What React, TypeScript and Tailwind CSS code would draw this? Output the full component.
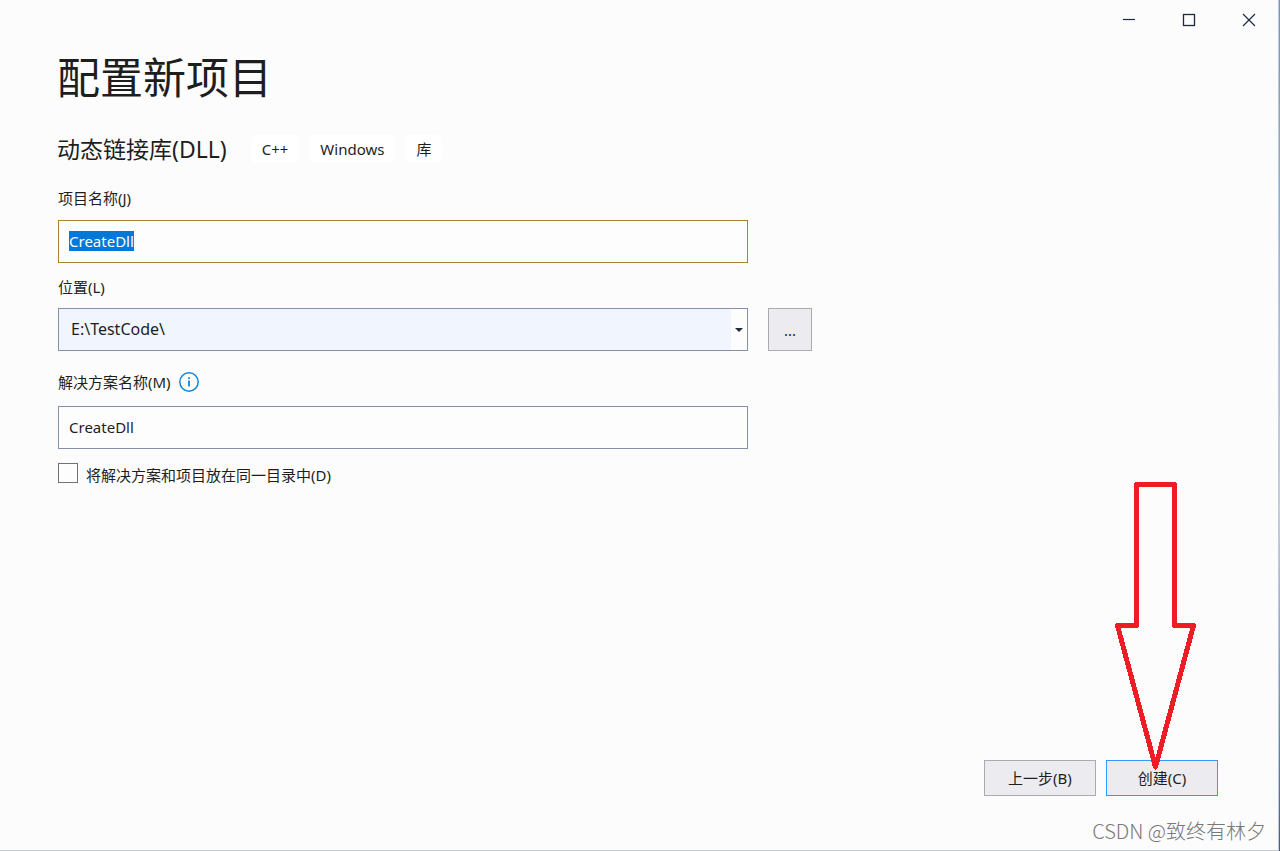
import { useEffect, useRef } from "react";
import type { ReactNode } from "react";

const tags = ["C++", "Windows", "库"];

function WindowButton({ label, children }: { label: string; children: ReactNode }) {
  return (
    <button type="button" aria-label={label} className="flex h-10 w-15 items-center justify-center hover:bg-[#e6e6ea]">
      <svg width="14" height="14" viewBox="0 0 14 14" fill="none" stroke="#1b2a41">
        {children}
      </svg>
    </button>
  );
}

function ArrowMark() {
  return (
    <svg
      className="pointer-events-none absolute bottom-6 left-2"
      width="84"
      height="292"
      viewBox="0 0 84 292"
      fill="none"
      stroke="#ee1c25"
      strokeWidth="5"
      strokeLinejoin="round"
      shapeRendering="crispEdges"
      aria-hidden="true"
    >
      <path d="M22.500 4.500H60.500V145.500H79.500L41.500 287L3.500 145.500H22.500Z" />
    </svg>
  );
}

export default function App() {
  const nameRef = useRef<HTMLInputElement>(null);

  useEffect(() => {
    nameRef.current?.focus();
    nameRef.current?.select();
  }, []);

  return (
    <div className="flex min-h-screen bg-linear-to-b from-[#5b9bd5] via-[#c3d0e6] via-60% to-[#2f62ad] pr-px font-['Noto_Sans','Noto_Sans_CJK_SC',sans-serif] text-[15px] leading-5 text-[#1e1e1e]">
      <div className="flex flex-1 flex-col border-r border-b border-[#c5cad8] bg-[#fcfcfc]">
        <header className="-mr-px flex justify-end">
          <WindowButton label="最小化">
            <path d="M1 6.500H13" strokeWidth="1.200" />
          </WindowButton>
          <WindowButton label="最大化">
            <rect x="1.500" y="1.500" width="11" height="11" strokeWidth="1.300" />
          </WindowButton>
          <WindowButton label="关闭">
            <path d="M1 1L13 13M13 1L1 13" strokeWidth="1.200" />
          </WindowButton>
        </header>

        <main className="flex-1 pr-5 pl-[57px]">
          <h1 className="mt-2 text-[43px] leading-[60px]">配置新项目</h1>

          <div className="mt-[23px] flex items-center">
            <h2 className="mr-6 text-[23px] leading-9">动态链接库(DLL)</h2>
            <ul className="flex gap-2.5">
              {tags.map((tag) => (
                <li key={tag} className="rounded-md bg-white px-[11px] py-1">
                  {tag}
                </li>
              ))}
            </ul>
          </div>

          <form className="mt-[21px] pl-px" onSubmit={(e) => e.preventDefault()}>
            <label htmlFor="project-name" className="block">
              项目名称(J)
            </label>
            <input
              ref={nameRef}
              id="project-name"
              type="text"
              defaultValue="CreateDll"
              className="mt-3 block h-[43px] w-full max-w-[690px] border border-[#a9842f] bg-[#fdfdfd] px-2.5 pb-0.5 outline-none selection:bg-[#0078d7] selection:text-white"
            />

            <label htmlFor="location" className="mt-3.5 block">
              位置(L)
            </label>
            <div className="mt-[11px] flex gap-5">
              <div className="relative w-full max-w-[690px]">
                <select
                  id="location"
                  defaultValue="E:\TestCode\"
                  className="block h-[43px] w-full appearance-none border border-[#8591a8] bg-[linear-gradient(to_left,#fdfdfd_16px,#f1f5fe_16px)] px-3 pb-0.5 text-[16px] outline-none"
                >
                  <option>E:\TestCode\</option>
                </select>
                <svg
                  className="pointer-events-none absolute top-5 right-[5px]"
                  width="8"
                  height="4"
                  viewBox="0 0 8 4"
                  fill="#1b2a41"
                  aria-hidden="true"
                >
                  <path d="M0 0H8L4 4Z" />
                </svg>
              </div>
              <button
                type="button"
                aria-label="浏览"
                className="h-[43px] w-11 shrink-0 border border-[#acacac] bg-[#ececf0]"
              >
                ...
              </button>
            </div>

            <div className="mt-[21px] flex items-center gap-2">
              <label htmlFor="solution-name">解决方案名称(M)</label>
              <svg width="20" height="20" viewBox="0 0 20 20" fill="none" stroke="#0f86dc" aria-hidden="true">
                <circle cx="10" cy="10" r="9.200" strokeWidth="1.500" />
                <path d="M10 8.500V14.500" strokeWidth="1.800" />
                <path d="M10 5.200V7" strokeWidth="1.800" />
              </svg>
            </div>
            <input
              id="solution-name"
              type="text"
              defaultValue="CreateDll"
              className="mt-3.5 block h-[43px] w-full max-w-[690px] border border-[#8591a8] bg-[#fdfdfd] px-2.5 pb-0.5 outline-none"
            />

            <div className="mt-3 flex items-center gap-2">
              <input
                id="same-directory"
                type="checkbox"
                className="size-5 appearance-none border border-[#717171] bg-[#fdfdfd] checked:bg-[#0078d7]"
              />
              <label htmlFor="same-directory" className="pt-1">
                将解决方案和项目放在同一目录中(D)
              </label>
            </div>
          </form>
        </main>

        <footer>
          <div className="flex justify-end gap-2.5 pr-15">
            <button type="button" className="h-9 w-28 border border-[#acacac] bg-[#ececf0]">
              上一步(B)
            </button>
            <div className="relative">
              <button type="button" className="h-9 w-28 border border-[#3399ff] bg-[#ececf0]">
                创建(C)
              </button>
              <ArrowMark />
            </div>
          </div>
          <p className="mt-[22px] mb-1.5 pr-3 text-right font-['Noto_Sans_CJK_SC',sans-serif] text-[20px] leading-[26px] font-light text-[#787878]">
            CSDN @致终有林夕
          </p>
        </footer>
      </div>
    </div>
  );
}
